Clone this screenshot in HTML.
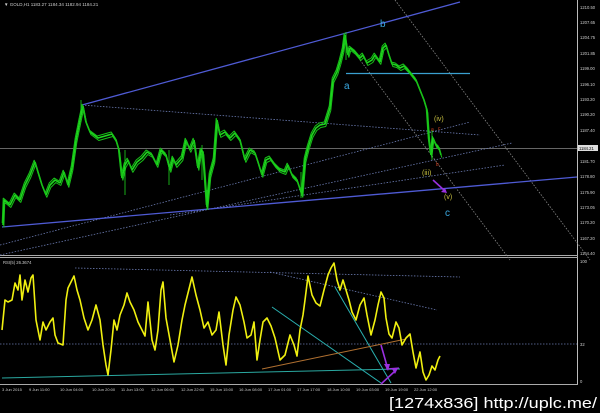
<!DOCTYPE html>
<html><head><meta charset="utf-8"><style>
html,body{margin:0;padding:0;background:#000;width:600px;height:413px;overflow:hidden}
svg{display:block}
text{font-family:"Liberation Sans",sans-serif}
</style></head><body>
<svg width="600" height="413" viewBox="0 0 600 413">
<defs>
<polyline id="pr" fill="none" stroke-linejoin="bevel" points="3,225 4,200 10,205 15,195 20,200 25,185 30,175 35,162 38,172 42,185 46,195 50,185 55,180 60,183 64,172 68,185 72,168 76,140 80,120 83,106 86,122 90,132 98,138 105,136 112,134 116,140 119,150 122,178 125,165 128,160 132,170 137,162 142,158 147,152 152,155 157,165 161,150 166,155 170,170 173,158 176,165 182,158 186,140 190,150 194,140 198,168 201,150 203,152 207,207 210,175 214,160 217,120 220,135 225,132 230,138 235,133 240,140 245,160 250,150 255,153 258,162 262,175 266,160 270,158 275,165 280,170 285,172 288,165 292,175 297,180 302,195 305,160 308,148 312,135 316,128 320,125 325,124 330,108 333,80 337,72 340,62 343,50 345,35 348,55 350,48 355,52 360,58 363,55 367,63 372,60 375,55 380,62 383,48 386,45 389,55 392,64 396,65 400,68 404,66 408,70 412,75 416,80 420,90 424,100 427,110 429,140 431,155 433,138 436,145 439,148 441,155"/>
</defs>
<rect width="600" height="413" fill="#000"/>
<text x="4" y="6" fill="#ccc" font-size="4.5">▼ GOLD,H1  1183.27 1184.34 1182.94 1184.21</text>
<line x1="577.5" y1="0" x2="577.5" y2="385" stroke="#bbb" stroke-width="1"/>
<g fill="#ccc" font-size="4.2">
<text x="580" y="9">1210.50</text><text x="580" y="24">1207.65</text><text x="580" y="39">1204.75</text>
<text x="580" y="55">1201.85</text><text x="580" y="70">1199.00</text><text x="580" y="86">1196.10</text>
<text x="580" y="101">1193.20</text><text x="580" y="116">1190.20</text><text x="580" y="132">1187.40</text>
<text x="580" y="163">1181.70</text><text x="580" y="178">1178.80</text><text x="580" y="194">1175.90</text>
<text x="580" y="209">1173.05</text><text x="580" y="224">1170.20</text><text x="580" y="240">1167.20</text>
<text x="580" y="255">1164.40</text>
<text x="580" y="263">100</text><text x="580" y="346">32</text><text x="580" y="383">0</text>
</g>
<rect x="578" y="145" width="20" height="6" fill="#ddd"/>
<text x="579" y="150" fill="#000" font-size="4.2">1184.21</text>
<line x1="0" y1="255.5" x2="578" y2="255.5" stroke="#aaa"/>
<line x1="0" y1="257.5" x2="578" y2="257.5" stroke="#aaa"/>
<line x1="0" y1="384.5" x2="578" y2="384.5" stroke="#aaa"/>
<line x1="0" y1="148.5" x2="577" y2="148.5" stroke="#888" stroke-width="0.8"/>
<g stroke="#6a7ab0" stroke-width="0.8" stroke-dasharray="1.5,1.5" fill="none">
<line x1="82" y1="105" x2="480" y2="135"/>
<line x1="0" y1="245" x2="470" y2="122"/>
<line x1="0" y1="255" x2="512" y2="143"/>
<line x1="170" y1="215" x2="505" y2="165"/>
</g>
<g stroke="#888" stroke-width="0.8" stroke-dasharray="1.5,1.5" fill="none">
<line x1="360" y1="60" x2="510" y2="260"/>
<line x1="395" y1="0" x2="590" y2="260"/>
</g>
<line x1="82" y1="105" x2="460" y2="2" stroke="#4f5bd5" stroke-width="1.3"/>
<line x1="2" y1="227" x2="577" y2="177" stroke="#4f5bd5" stroke-width="1.3"/>
<line x1="346" y1="73.5" x2="470" y2="73.5" stroke="#3aa0d0" stroke-width="1.3"/>
<use href="#pr" stroke="#1ed81e" stroke-width="1.6"/>
<use href="#pr" stroke="#18c018" stroke-width="1" transform="translate(0.8,2.5)"/>
<use href="#pr" stroke="#18c018" stroke-width="1" transform="translate(-0.8,-2)"/>
<g stroke="#1ed81e" stroke-width="0.8">
<line x1="81" y1="100" x2="81" y2="115"/><line x1="125" y1="150" x2="125" y2="195"/>
<line x1="169" y1="150" x2="169" y2="185"/><line x1="202" y1="145" x2="202" y2="180"/>
<line x1="207" y1="190" x2="207" y2="210"/><line x1="346" y1="32" x2="346" y2="60"/>
<line x1="432" y1="130" x2="432" y2="160"/><line x1="301" y1="172" x2="301" y2="198"/>
</g>
<text x="380" y="27" fill="#3aa8e0" font-size="10">b</text>
<text x="344" y="89" fill="#3aa8e0" font-size="10">a</text>
<text x="434" y="121" fill="#c8c040" font-size="7">(iv)</text>
<text x="431" y="131" fill="#d04020" font-size="5">a</text>
<text x="438" y="130" fill="#d04020" font-size="5">c</text>
<text x="436" y="166" fill="#d04020" font-size="5">b</text>
<text x="422" y="175" fill="#c8c040" font-size="7">(iii)</text>
<text x="444" y="199" fill="#c8c040" font-size="7">(v)</text>
<text x="445" y="216" fill="#3aa8e0" font-size="10">c</text>
<line x1="433" y1="180" x2="445" y2="191" stroke="#9a30e0" stroke-width="1.6"/>
<polygon points="447,193 441,192 445,188" fill="#9a30e0"/>
<text x="3" y="264" fill="#ccc" font-size="4.2">RSI(5) 26.3674</text>
<g stroke="#6a7ab0" stroke-width="0.8" stroke-dasharray="1.5,1.5" fill="none">
<line x1="75" y1="268" x2="460" y2="277"/>
<line x1="270" y1="272" x2="437" y2="310"/>
<line x1="0" y1="344" x2="577" y2="344"/>
</g>
<line x1="2" y1="378" x2="400" y2="369" stroke="#2aa8a0" stroke-width="1"/>
<line x1="272" y1="307" x2="381" y2="383" stroke="#2ab0b0" stroke-width="1"/>
<line x1="335" y1="287" x2="391" y2="383" stroke="#2ab0b0" stroke-width="1"/>
<line x1="262" y1="369" x2="406" y2="339" stroke="#b07030" stroke-width="1"/>
<polyline fill="none" stroke="#f0f010" stroke-width="1.6" stroke-linejoin="round" points="2,330 5,300 8,302 12,300 15,283 18,290 20,275 22,300 25,280 28,292 31,278 33,275 36,320 40,340 43,322 46,330 50,322 53,318 55,335 58,343 63,345 66,300 68,288 72,280 74,276 77,290 80,300 84,318 88,330 92,320 96,305 100,320 103,345 106,365 108,375 111,350 114,320 117,330 120,315 124,305 127,293 130,302 134,310 138,322 142,330 145,336 148,302 152,340 155,350 158,330 161,290 163,282 166,318 170,340 174,362 178,345 182,320 185,305 188,293 192,277 196,295 200,310 204,328 208,322 212,335 216,330 219,312 223,345 226,365 229,335 233,310 236,297 240,305 244,322 247,338 251,335 254,322 257,360 260,340 263,322 267,318 271,326 275,338 280,360 285,355 290,335 294,345 297,356 300,330 303,315 305,300 308,276 312,295 316,303 320,306 324,290 328,275 331,268 334,263 337,280 340,290 343,280 346,290 349,300 352,312 356,320 360,305 364,298 367,315 371,335 375,320 378,305 381,292 384,298 386,318 389,334 392,338 396,322 399,328 402,345 406,338 410,334 413,352 416,368 420,352 423,372 426,380 429,375 432,366 435,370 438,360 440,356"/>
<line x1="381" y1="345" x2="387" y2="366" stroke="#9a30e0" stroke-width="1.6"/>
<polygon points="388,371 384,364 390,364" fill="#9a30e0"/>
<line x1="381" y1="384" x2="394" y2="372" stroke="#9a30e0" stroke-width="1.6"/>
<polygon points="398,368 392,369 395,374" fill="#9a30e0"/>
<line x1="386" y1="369" x2="399" y2="368" stroke="#9a30e0" stroke-width="1.2"/>
<g fill="#ccc" font-size="4">
<text x="2" y="391">3 Jun 2015</text><text x="29" y="391">9 Jun 11:00</text><text x="60" y="391">10 Jun 04:00</text>
<text x="92" y="391">10 Jun 20:00</text><text x="121" y="391">11 Jun 13:00</text><text x="151" y="391">12 Jun 06:00</text>
<text x="181" y="391">12 Jun 22:00</text><text x="210" y="391">15 Jun 15:00</text><text x="239" y="391">16 Jun 08:00</text>
<text x="268" y="391">17 Jun 01:00</text><text x="297" y="391">17 Jun 17:00</text><text x="327" y="391">18 Jun 10:00</text>
<text x="356" y="391">19 Jun 03:00</text><text x="385" y="391">19 Jun 19:00</text><text x="414" y="391">22 Jun 12:00</text>
</g>
<text x="389" y="408" fill="#fff" font-size="15" textLength="208" lengthAdjust="spacingAndGlyphs">[1274x836] http://uplc.me/</text>
</svg>
</body></html>
